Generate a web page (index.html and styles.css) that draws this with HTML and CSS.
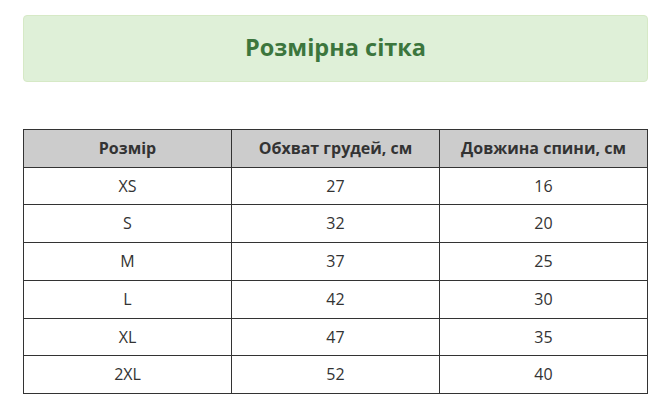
FILE: index.html
```html
<!DOCTYPE html>
<html lang="uk">
<head>
<meta charset="utf-8">
<link rel="stylesheet" href="styles.css">
</head>
<body>
<div class="page">
  <div class="banner"><h2 class="banner-title">Розмірна сітка</h2></div>
  <table class="sizes">
    <thead>
      <tr><th>Розмір</th><th>Обхват грудей, см</th><th>Довжина спини, см</th></tr>
    </thead>
    <tbody>
      <tr><td>XS</td><td>27</td><td>16</td></tr>
      <tr><td>S</td><td>32</td><td>20</td></tr>
      <tr><td>M</td><td>37</td><td>25</td></tr>
      <tr><td>L</td><td>42</td><td>30</td></tr>
      <tr><td>XL</td><td>47</td><td>35</td></tr>
      <tr><td>2XL</td><td>52</td><td>40</td></tr>
    </tbody>
  </table>
</div>
</body>
</html>
```
FILE: styles.css
```css
html, body { margin: 0; padding: 0; background: #fff; }
body { font-family: "Open Sans", "Liberation Sans", sans-serif; color: #333; }
.page { padding: 15px 24px 0 23px; }
.banner {
  box-sizing: border-box;
  background: #dff0d8;
  border: 1px solid #d6e9c6;
  border-radius: 4px;
  height: 67px;
  padding-bottom: 4px;
  display: flex;
  align-items: center;
  justify-content: center;
}
.banner-title {
  margin: 0;
  font-size: 23.5px;
  font-weight: 700;
  color: #3c763d;
}
.sizes {
  margin-top: 47px;
  width: 100%;
  border-collapse: collapse;
  table-layout: fixed;
}
.sizes th, .sizes td {
  border: 1px solid #333;
  text-align: center;
  font-size: 16px;
  line-height: 21.7px;
  padding: 8px 4px 7px;
}
.sizes th { background: #ccc; font-weight: 700; color: #333; }
```
